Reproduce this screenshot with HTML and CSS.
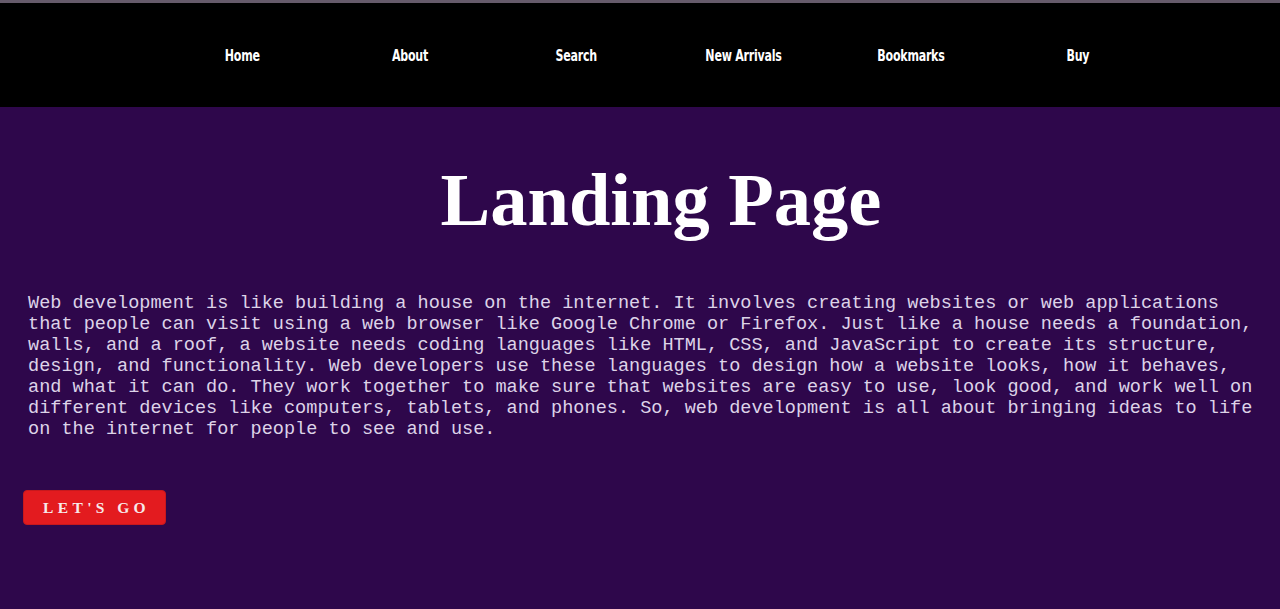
FILE: index.html
```html
<!DOCTYPE html>
<html lang="en">
<head>
<meta charset="utf-8">
<title>Landing Page</title>
<link rel="stylesheet" href="styles.css">
</head>
<body>
<div class="topline"></div>
<header class="nav">
  <ul class="nav-list">
    <li><a href="#">Home</a></li>
    <li><a href="#">About</a></li>
    <li><a href="#">Search</a></li>
    <li><a href="#">New Arrivals</a></li>
    <li><a href="#">Bookmarks</a></li>
    <li><a href="#">Buy</a></li>
  </ul>
</header>
<main class="hero">
  <h1 class="title">Landing Page</h1>
  <p class="intro">Web development is like building a house on the internet. It involves creating websites or web applications that people can visit using a web browser like Google Chrome or Firefox. Just like a house needs a foundation, walls, and a roof, a website needs coding languages like HTML, CSS, and JavaScript to create its structure, design, and functionality. Web developers use these languages to design how a website looks, how it behaves, and what it can do. They work together to make sure that websites are easy to use, look good, and work well on different devices like computers, tablets, and phones. So, web development is all about bringing ideas to life on the internet for people to see and use.</p>
  <button class="cta">LET'S GO</button>
</main>
</body>
</html>
```

FILE: styles.css
```css
html, body {
  margin: 0;
  padding: 0;
}
body {
  background: #2e074b;
  min-height: 609px;
}
.topline {
  height: 3px;
  background: #665b6b;
}
.nav {
  background: #000;
  height: 104px;
  display: flex;
  align-items: center;
}
.nav-list {
  list-style: none;
  margin: 2px auto 0;
  padding: 0 0 0 40px;
  display: flex;
  justify-content: center;
}
.nav-list li {
  width: 167px;
  text-align: center;
}
.nav-list a {
  display: inline-block;
  color: #fff;
  text-decoration: none;
  font-family: "Liberation Sans Narrow", "DejaVu Sans Condensed", "Liberation Sans", sans-serif;
  font-weight: bold;
  font-size: 15px;
  letter-spacing: -0.3px;
  transform: scaleX(0.82);
}
.hero {
  padding: 51px 16px 0 28px;
}
.title {
  margin: 0;
  font-family: "Liberation Serif", "Times New Roman", serif;
  font-weight: bold;
  font-size: 74.5px;
  color: #fff;
  text-align: center;
  padding-left: 30px;
}
.intro {
  margin: 50px 0 0 0;
  font-family: "Liberation Mono", "Courier New", monospace;
  font-size: 18.56px;
  color: #ddd3e8;
}
.cta {
  display: block;
  margin: 50px 0 0 -5px;
  width: 143px;
  height: 35px;
  background: #e31b1f;
  border: 1px solid #c8181c;
  border-radius: 4px;
  color: #f7eaea;
  font-family: "Liberation Serif", "Times New Roman", serif;
  font-weight: bold;
  font-size: 15.5px;
  letter-spacing: 4.4px;
  padding: 0 0 0 4px;
  cursor: pointer;
}
```
